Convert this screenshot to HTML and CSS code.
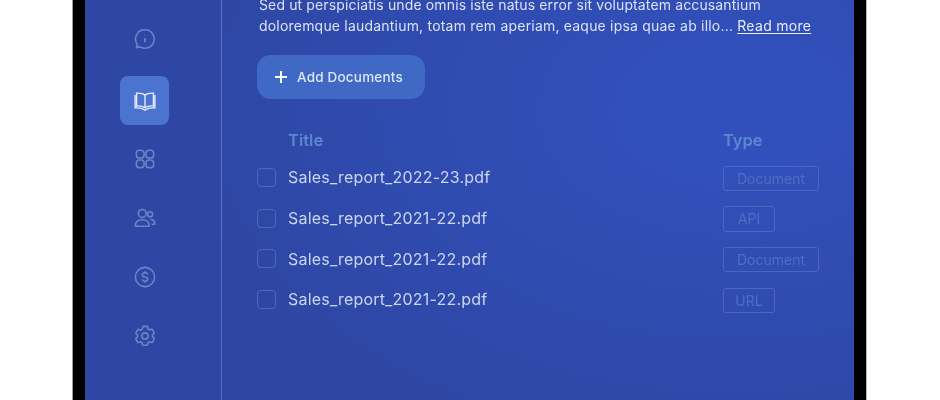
FILE: index.html
```html
<!DOCTYPE html>
<html lang="en">
<head>
  <meta charset="UTF-8" />
  <meta name="viewport" content="width=device-width, initial-scale=1.0"/>
  <title>Documents</title>
  <link rel="stylesheet" href="styles.css">
</head>
<body>

<div class="device">
  <div class="screen">

    <nav class="sidebar">
      <a href="#" class="nav-item nav-first">
        <svg viewBox="0 0 24 24"><path d="M12 2a10 10 0 1 1-5.200 18.500l-3.600.9c-.6.100-.8-.2-.5-.7l1.100-2.600A10 10 0 0 1 12 2z"/><path d="M12 11.200v4.400M12 7.800v.7" stroke-width="2"/></svg>
      </a>
      <a href="#" class="nav-item active">
        <svg viewBox="0 0 24 24"><path d="M12 5.600C10 3.800 6.500 3.300 2.800 3.500v13.900c3.600-.2 7 .2 9.200 2 2.200-1.800 5.600-2.200 9.200-2V3.500C17.500 3.300 14 3.800 12 5.600z"/><path d="M12 5.600v13.800"/><path d="M1.200 5.500v14c3.500-.1 6.800.2 8.800 1.300l2 1.300 2-1.300c2-1.100 5.300-1.400 8.800-1.300v-14"/></svg>
      </a>
      <a href="#" class="nav-item">
        <svg viewBox="0 0 24 24"><rect x="2.500" y="2.500" width="8.500" height="8.500" rx="3.500"/><rect x="13" y="2.500" width="8.500" height="8.500" rx="3.500"/><rect x="2.500" y="13" width="8.500" height="8.500" rx="3.500"/><rect x="13" y="13" width="8.500" height="8.500" rx="3.500"/></svg>
      </a>
      <a href="#" class="nav-item">
        <svg viewBox="0 0 24 24"><circle cx="9" cy="7" r="4.300"/><path d="M1.500 20.500c0-4 3-6.500 7.500-6.500s7.500 2.500 7.500 6.500c0 .4-.2.600-.6.600H2.100c-.4 0-.6-.2-.6-.6z"/><circle cx="17.500" cy="8" r="2.800"/><path d="M18 13.500c2.800.2 4.700 2 4.700 4.800 0 .4-.2.600-.6.600h-3"/></svg>
      </a>
      <a href="#" class="nav-item">
        <svg viewBox="0 0 24 24"><circle cx="12" cy="12" r="10.500"/><path d="M15 9.300c-.3-1.200-1.500-1.900-3-1.900-1.700 0-3 .9-3 2.300s1.200 2 3 2.300 3 .9 3 2.300-1.300 2.300-3 2.300c-1.500 0-2.700-.7-3-1.900M12 5.800v1.600M12 16.700v1.600"/></svg>
      </a>
      <a href="#" class="nav-item">
        <svg viewBox="0 0 24 24"><circle cx="12" cy="12" r="3.400"/><path d="M10 1.500h4c.6 0 .8.300.9.800l.4 2.200 1.600.9 2.100-.8c.5-.2.900 0 1.100.4l1.900 3.200c.3.500.1.800-.2 1.100l-1.700 1.500v1.800l1.700 1.500c.3.300.5.600.2 1.100L20.100 18.600c-.2.400-.6.600-1.100.4l-2.100-.8-1.600.9-.4 2.200c-.1.500-.3.800-.9.800h-4c-.6 0-.8-.3-.9-.8l-.4-2.200-1.600-.9-2.100.8c-.5.200-.9 0-1.100-.4L2.100 15.400c-.3-.5-.1-.8.200-1.100L4 12.900v-1.800L2.300 9.600c-.3-.3-.5-.6-.2-1.100L4 5.300c.2-.4.600-.6 1.100-.4l2.100.8 1.600-.9.400-2.200c.1-.5.300-.7.800-.7z" stroke-linejoin="round"/></svg>
      </a>
    </nav>

    <main class="content">
      <p class="intro">
        <span class="intro-line">Sed ut perspiciatis unde omnis iste natus error sit voluptatem accusantium</span>
        <span class="intro-line line-two">doloremque laudantium, totam rem aperiam, eaque ipsa quae ab illo... <a href="#">Read more</a></span>
      </p>

      <button class="add-btn"><span class="plus"></span>Add Documents</button>

      <div class="doc-table">
        <div class="doc-row doc-head">
          <span></span>
          <span>Title</span>
          <span>Type</span>
        </div>
        <div class="doc-row">
          <span class="check"></span>
          <span class="doc-name">Sales_report_2022-23.pdf</span>
          <span class="tag tag-wide">Document</span>
        </div>
        <div class="doc-row">
          <span class="check"></span>
          <span class="doc-name">Sales_report_2021-22.pdf</span>
          <span class="tag">API</span>
        </div>
        <div class="doc-row">
          <span class="check"></span>
          <span class="doc-name">Sales_report_2021-22.pdf</span>
          <span class="tag tag-wide">Document</span>
        </div>
        <div class="doc-row">
          <span class="check"></span>
          <span class="doc-name">Sales_report_2021-22.pdf</span>
          <span class="tag">URL</span>
        </div>
      </div>
    </main>

  </div>
</div>

</body>
</html>
```

FILE: styles.css
```css
html, body {
  margin: 0;
  height: 400px;
  overflow: hidden;
  background: white;
}
body {
  font-family: Inter, "Liberation Sans", sans-serif;
}
.device {
  width: 769px;
  height: 400px;
  margin-left: 72px;
  border-left: 1px solid #9a9a9a;
  border-right: 1px solid #b5b5b5;
  background: black;
  padding: 0 12px;
  filter: blur(0.45px);
}
.screen {
  display: flex;
  height: 400px;
  background:
    radial-gradient(ellipse 560px 360px at 650px 110px, #3250bc 0%, #3250bc 12%, rgba(50,80,188,0) 100%),
    #2e47a4;
}
.sidebar {
  box-sizing: border-box;
  width: 137px;
  height: 400px;
  padding: 14px 0 0 35px;
  border-right: 1px solid #5a71bb;
  display: flex;
  flex-direction: column;
  gap: 9.750px;
}
.nav-item {
  width: 49px;
  height: 49px;
  flex: none;
  display: flex;
  align-items: center;
  justify-content: center;
  border-radius: 8px;
}
.nav-first {
  margin-bottom: 3.250px;
}
.nav-item svg {
  width: 22px;
  height: 22px;
  fill: none;
  stroke: #6e83c8;
  stroke-width: 1.700;
}
.nav-item.active {
  background: #4a74cf;
}
.nav-item.active svg {
  stroke: #e6edfb;
  stroke-width: 1.500;
}
.content {
  flex: 1;
  padding-left: 35px;
}
.intro {
  width: 575px;
  margin: -6px 0 0 2px;
  font-size: 14px;
  letter-spacing: 0.130px;
  line-height: 21px;
  color: #dbe2f6;
}
.intro-line {
  display: block;
  white-space: nowrap;
}
.line-two {
  letter-spacing: 0.200px;
}
.intro a {
  color: #e8edfa;
  letter-spacing: 0.300px;
  text-underline-offset: 2px;
}
.add-btn {
  display: flex;
  align-items: center;
  width: 168px;
  height: 44px;
  margin-top: 19px;
  padding: 0 0 0 18px;
  border: none;
  border-radius: 14px;
  background: #4069c5;
  color: #dfe6f8;
  font-family: inherit;
  font-size: 13.500px;
  letter-spacing: 0.200px;
  font-weight: 500;
  cursor: pointer;
}
.plus {
  width: 12px;
  height: 12px;
  margin-right: 10px;
  background:
    linear-gradient(white, white) center / 100% 2px no-repeat,
    linear-gradient(white, white) center / 2px 100% no-repeat;
}
.doc-table {
  margin-top: 24px;
}
.doc-row {
  display: grid;
  grid-template-columns: 19px 423px 110px;
  column-gap: 12px;
  align-items: center;
  height: 40.700px;
}
.doc-head {
  height: 34px;
  font-size: 16.500px;
  font-weight: 600;
  color: #5b88cf;
}
.check {
  box-sizing: border-box;
  width: 19px;
  height: 19px;
  border: 1.500px solid #5068b8;
  border-radius: 4px;
}
.doc-name {
  font-size: 16px;
  letter-spacing: 0.200px;
  color: #cbd5f2;
}
.tag {
  box-sizing: border-box;
  width: 52px;
  height: 25.500px;
  margin-top: 2px;
  line-height: 23px;
  text-align: center;
  font-size: 14px;
  color: #4f6dc2;
  border: 1.500px solid #4a66bf;
  border-radius: 3px;
}
.tag-wide {
  width: 96px;
}
```
